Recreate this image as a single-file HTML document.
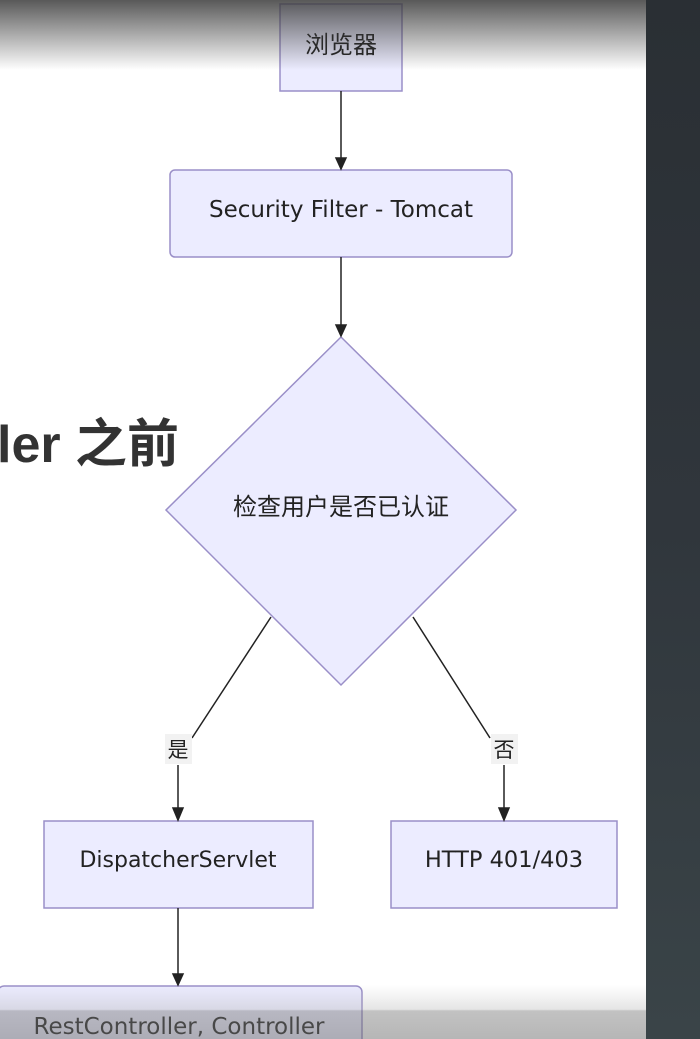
<!DOCTYPE html>
<html><head><meta charset="utf-8"><style>
html,body{margin:0;padding:0;width:700px;height:1039px;overflow:hidden;background:#fff;font-family:"DejaVu Sans","Noto Sans CJK SC",sans-serif}
.right{position:absolute;left:646px;top:0;width:54px;height:1039px;background:linear-gradient(#2a2f34,#30363c 50%,#3a4448)}
.topg{position:absolute;left:0;top:0;width:646px;height:70px;background:linear-gradient(rgba(60,60,60,.85),rgba(255,255,255,0))}
.botg{position:absolute;left:0;top:985px;width:646px;height:54px;background:linear-gradient(rgba(255,255,255,0),rgba(170,170,170,.3) 45%,rgba(120,120,120,.45) 48%,rgba(110,110,110,.5))}
.big{position:absolute;left:-3px;top:402px;font-size:52px;font-weight:bold;color:#333;font-family:"Liberation Sans","Noto Sans CJK SC",sans-serif}
</style></head><body>
<div class="big">ler 之前</div>
<svg width="646" height="1039" style="position:absolute;left:0;top:0" font-family="DejaVu Sans, Noto Sans CJK SC, sans-serif">
<g fill="#ECECFF" stroke="#9a8fc8" stroke-width="1.5">
<rect x="280" y="4" width="122" height="87"/>
<rect x="170" y="170" width="342" height="87" rx="5"/>
<polygon points="341,337 516,510 341,685 166,510"/>
<rect x="44" y="821" width="269" height="87"/>
<rect x="391" y="821" width="226" height="87"/>
<rect x="-2" y="986" width="364" height="80" rx="6"/>
</g>
<g stroke="#222" stroke-width="1.5" fill="none">
<line x1="341" y1="91" x2="341" y2="160"/><path d="M336,158 L346,158 L341,169z" fill="#222"/>
<line x1="341" y1="257" x2="341" y2="327"/><path d="M336,325 L346,325 L341,336z" fill="#222"/>
<line x1="271" y1="617" x2="192" y2="738"/>
<line x1="413" y1="617" x2="490" y2="738"/>
<line x1="178" y1="765" x2="178" y2="810"/><path d="M173,808 L183,808 L178,820z" fill="#222"/>
<line x1="504" y1="765" x2="504" y2="810"/><path d="M499,808 L509,808 L504,820z" fill="#222"/>
<line x1="178" y1="908" x2="178" y2="976"/><path d="M173,974 L183,974 L178,985z" fill="#222"/>
</g>
<rect x="165" y="734" width="27" height="30" fill="#f2f2f2"/>
<rect x="491" y="734" width="27" height="30" fill="#f2f2f2"/>
<g fill="#222" text-anchor="middle">
<text x="341" y="53" font-size="24">浏览器</text>
<text x="341" y="217" font-size="23">Security Filter - Tomcat</text>
<text x="341" y="515" font-size="24">检查用户是否已认证</text>
<text x="178" y="757" font-size="21">是</text>
<text x="504" y="757" font-size="21">否</text>
<text x="178" y="867" font-size="22">DispatcherServlet</text>
<text x="504" y="867" font-size="22.5">HTTP 401/403</text>
<text x="179" y="1034" font-size="23">RestController, Controller</text>
</g>
</svg>
<div class="topg"></div>
<div class="botg"></div>
<div class="right"></div>
</body></html>
